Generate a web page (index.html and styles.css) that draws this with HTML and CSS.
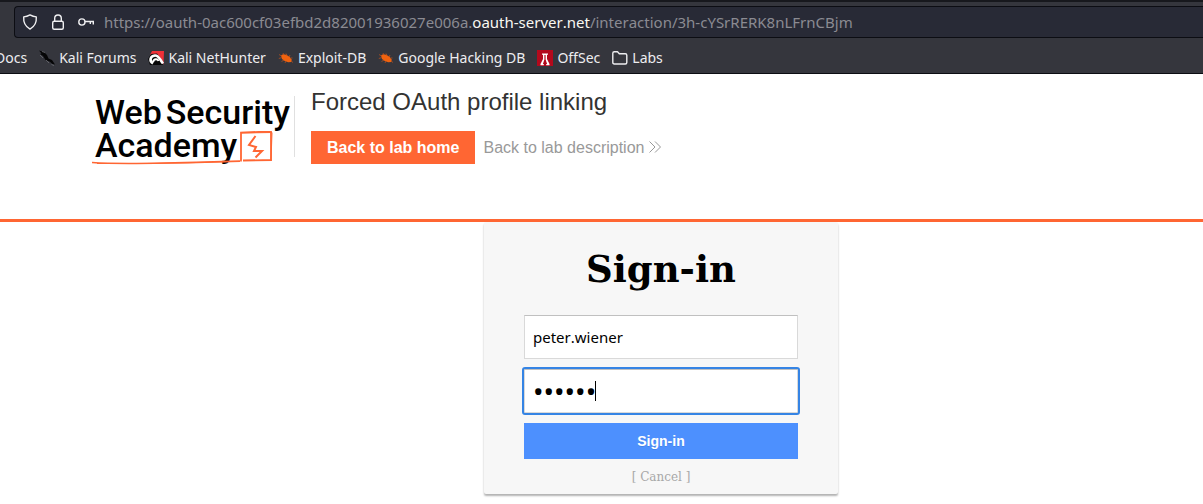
FILE: index.html
```html
<!DOCTYPE html>
<html lang="en">
<head>
<meta charset="utf-8">
<title>Sign-in</title>
<link rel="stylesheet" href="styles.css">
</head>
<body>
<svg class="defs" aria-hidden="true">
  <symbol id="bug" viewBox="0 0 16 16">
    <path fill="#f0620f" d="M3 5.500 5 4.300l3 .4 3.500 2 2.300 3-.6 2.300-3 .3-3.500-1.200L4 9z"/>
    <path fill="none" stroke="#b4511f" stroke-width=".8" d="M1 4.500 3.500 6M.8 8.500l3-1M5 3l1 2M8 3.500 9 5.500M12 5l-1 2M14.500 8h-2M3.500 11.500 6 10M7 13l1-2M13 11l2 1.500"/>
  </symbol>
</svg>
<div class="chrome">
  <div class="address">
    <svg class="address-icon" viewBox="0 0 16 16" fill="none" stroke="#f0f0f2" stroke-width="1.400" stroke-linejoin="round"><path d="M8 .9c1.800 1.100 4 1.900 6.300 2 .4 5.300-1.900 9.800-6.300 12.200C3.600 12.700 1.300 8.200 1.700 2.900 4 2.800 6.200 2 8 .9z"/></svg>
    <svg class="address-icon" viewBox="0 0 16 16" fill="none" stroke="#f0f0f2" stroke-width="1.400"><rect x="2.700" y="7.200" width="10.600" height="8" rx="1.500"/><path d="M4.700 7.200V4.300a3.300 3.300 0 0 1 6.600 0v2.900"/></svg>
    <svg class="address-icon" viewBox="0 0 16 16" fill="none" stroke="#f0f0f2" stroke-width="1.400"><circle cx="3.900" cy="8" r="3.100"/><path d="M7 7.500h8.300v3M12.300 7.500v2.500"/></svg>
    <div class="url" role="textbox" aria-label="Address" contenteditable="true" spellcheck="false">https://oauth-0ac600cf03efbd2d82001936027e006a.<span class="url-host">oauth-server.net</span>/interaction/3h-cYSrRERK8nLFrnCBjm</div>
  </div>
  <nav class="bookmarks" aria-label="Bookmarks">
    <a class="bookmark" href="#">Docs</a>
    <a class="bookmark" href="#"><svg class="bookmark-icon" viewBox="0 0 16 16"><path fill="#050506" d="M0 .5 5 2l3 3 1.500 3.500L13 10l3 4.500-2.500-.5-3-2.500-4-1.500-2.500-4L1 4l1.500-.5z"/><path stroke="#74767b" stroke-width=".7" fill="none" d="M1 5l3 3M3 1.500l3 1M7 10l3 3M12.500 14.500l2.500 1"/></svg>Kali Forums</a>
    <a class="bookmark" href="#"><svg class="bookmark-icon" viewBox="0 0 16 16"><path fill="#ef3038" d="M4 1h12l-.5 13.500L9 5 2 5z"/><path fill="#080809" d="M0 9 3 4l6-.5 6 8V15H2z"/><path fill="none" stroke="#fff" stroke-width="2.600" d="M5 13.500C1 11 2 6 7 5.500c4-.2 5 4.500 8 8"/><path fill="none" stroke="#fff" stroke-width="2" d="M5 12c1-3.500 4.500-3.500 5.500-1"/></svg>Kali NetHunter</a>
    <a class="bookmark" href="#"><svg class="bookmark-icon"><use href="#bug"/></svg>Exploit-DB</a>
    <a class="bookmark" href="#"><svg class="bookmark-icon"><use href="#bug"/></svg>Google Hacking DB</a>
    <a class="bookmark" href="#"><svg class="bookmark-icon" viewBox="0 0 16 16"><path fill="#b3091c" d="M0 0h16v16H0z"/><path fill="#fff" d="M5 3.500h6v1.300h-1V9l2.500 5v1.200H9.200V14h.9L8.600 9.500V5H7.400v4.500L5.900 14h.9v1.200H3.500V14L6 9V4.800H5z"/></svg>OffSec</a>
    <a class="bookmark" href="#"><svg class="bookmark-icon" viewBox="0 0 16 16" fill="none" stroke="#ededf0" stroke-width="1.400" stroke-linejoin="round"><path d="M.8 12.500V3.200q0-1.500 1.500-1.500h3.200l1.800 2h6q1.500 0 1.500 1.500v7.300q0 1.500-1.500 1.500h-11Q.8 14 .8 12.500z"/></svg>Labs</a>
  </nav>
</div>

<header class="lab">
  <a class="logo" href="#" aria-label="Web Security Academy">
    <span class="logo-line"><span>Web</span> <span>Security</span></span>
    <span class="logo-line">Academy</span>
    <svg class="logo-mark" viewBox="0 0 184 36" fill="none" stroke="#ff6633"><path stroke-width="1.500" d="M0 31.500c22 1.500 48 1 72 .5s55-1.500 76-2"/><path stroke-width="1.200" d="M5 32.500h50c32-.5 60-1 93-2"/><path stroke-width="1.800" d="M149 30.500V1.500l30-1v28.500l-28 .5"/><path stroke-width="1" d="M149 2l31-.5-1 28.500"/><path stroke-width="2" d="M163.500 5 157 14l7 2-2 4h8l-6.500 6.500"/></svg>
  </a>
  <div class="lab-info">
    <h2 class="lab-title">Forced OAuth profile linking</h2>
    <div class="lab-links">
      <a class="lab-home" href="#">Back to lab home</a>
      <a class="lab-description" href="#">Back to lab description <svg class="chevrons" viewBox="0 0 12 12" fill="none" stroke="#999"><path d="M.5.5 6 6 .5 11.500M6 .5 11.500 6 6 11.500"/></svg></a>
    </div>
  </div>
</header>

<main class="page">
  <section class="card">
    <h1 class="card-title">Sign-in</h1>
    <form class="form">
      <input class="field" type="text" aria-label="Login" value="peter.wiener">
      <div class="password">
        <input class="field field-active" type="password" aria-label="Password" value="secret">
        <span class="caret"></span>
      </div>
      <button class="submit" type="button">Sign-in</button>
    </form>
    <a class="cancel" href="#">[ Cancel ]</a>
  </section>
</main>
</body>
</html>
```
FILE: styles.css
```css
* { box-sizing: border-box; }

body {
  margin: 0;
  background: #fff;
  overflow-x: hidden;
}

a { text-decoration: none; }

.defs {
  position: absolute;
  width: 0;
  height: 0;
}

.chrome {
  background: #35363d;
  border-top: 2px solid #17181d;
  border-bottom: 1px solid #0c0d13;
  padding-top: 4px;
  font-family: "Noto Sans", sans-serif;
  font-kerning: none;
}

.address {
  display: flex;
  align-items: center;
  gap: 12px;
  height: 32px;
  margin-left: 14px;
  padding-left: 7px;
  background: #282a36;
  border: 1px solid #0c0d13;
  border-right: 0;
  border-radius: 4px 0 0 4px;
}

.address-icon {
  flex: none;
  width: 16px;
  height: 16px;
}

.url {
  margin-left: -2px;
  color: #8b8b92;
  font-size: 15px;
  white-space: nowrap;
}

.url-host { color: #f8f8f2; }

.bookmarks {
  display: flex;
  align-items: center;
  gap: 12px;
  height: 35px;
  margin-left: -5px;
  padding-top: 4px;
}

.bookmark {
  display: flex;
  align-items: center;
  gap: 4px;
  color: #ededf0;
  font-size: 14px;
  line-height: 20px;
  white-space: nowrap;
}

.bookmark-icon {
  width: 16px;
  height: 16px;
}

.lab {
  display: flex;
  align-items: flex-start;
  height: 148px;
  padding: 14px 0 0 92px;
  border-bottom: 3px solid #ff6633;
  font-family: "Liberation Sans", Arial, sans-serif;
}

.logo {
  position: relative;
  width: 203px;
  height: 61px;
  margin-top: 8px;
  padding-left: 3px;
  border-right: 1px solid #e0e0e0;
  color: #000;
  font-family: Roboto, sans-serif;
  font-size: 34px;
  font-weight: 500;
  line-height: 33px;
  white-space: nowrap;
}

.logo-line {
  display: flex;
  gap: 4px;
}

.logo-mark {
  position: absolute;
  left: 0;
  top: 35px;
  width: 184px;
  height: 36px;
}

.lab-info { padding-left: 16px; }

.lab-title {
  margin: 0 0 16px;
  color: #333332;
  font-size: 24px;
  font-weight: 400;
  line-height: 27px;
}

.lab-links {
  display: flex;
  align-items: center;
  gap: 8px;
  font-size: 16px;
}

.lab-home {
  padding: 0 16px;
  background: #ff6633;
  color: #fff;
  font-weight: 700;
  line-height: 33px;
}

.lab-description { color: #999; }

.chevrons {
  width: 12px;
  height: 12px;
}

.page {
  display: flex;
  justify-content: center;
  padding: 0 0 10px 119px;
}

.card {
  width: 354px;
  padding: 25px 40px 9px;
  background: #f7f7f7;
  border-radius: 2px;
  box-shadow: 0 2px 2px rgba(0, 0, 0, 0.3);
  font-family: "DejaVu Serif", serif;
  text-align: center;
}

.card-title {
  margin: 0 0 23px;
  font-size: 37px;
  font-weight: 700;
  line-height: 45px;
}

.form {
  display: flex;
  flex-direction: column;
  gap: 10px;
}

.password { position: relative; }

.field {
  display: block;
  width: 100%;
  height: 44px;
  padding: 0 8px;
  border: 1px solid #d9d9d9;
  border-top-color: #c0c0c0;
  border-radius: 0;
  background: #fff;
  color: #000;
  font-family: "Noto Sans", sans-serif;
  font-size: 15px;
  font-kerning: none;
}

.field-active {
  outline: 2px solid #3584e4;
  border-radius: 1px;
  font-size: 28px;
}

.caret {
  position: absolute;
  left: 71px;
  top: 12px;
  width: 1px;
  height: 20px;
  background: #000;
}

.submit {
  height: 36px;
  border: 0;
  background: #4d90fe;
  color: #fff;
  font-family: "Liberation Sans", Arial, sans-serif;
  font-size: 14px;
  font-weight: 700;
  text-shadow: 0 1px rgba(0, 0, 0, 0.1);
}

.cancel {
  display: block;
  margin-top: 10px;
  color: #a8a8a8;
  font-size: 12px;
  line-height: 16px;
}
```
